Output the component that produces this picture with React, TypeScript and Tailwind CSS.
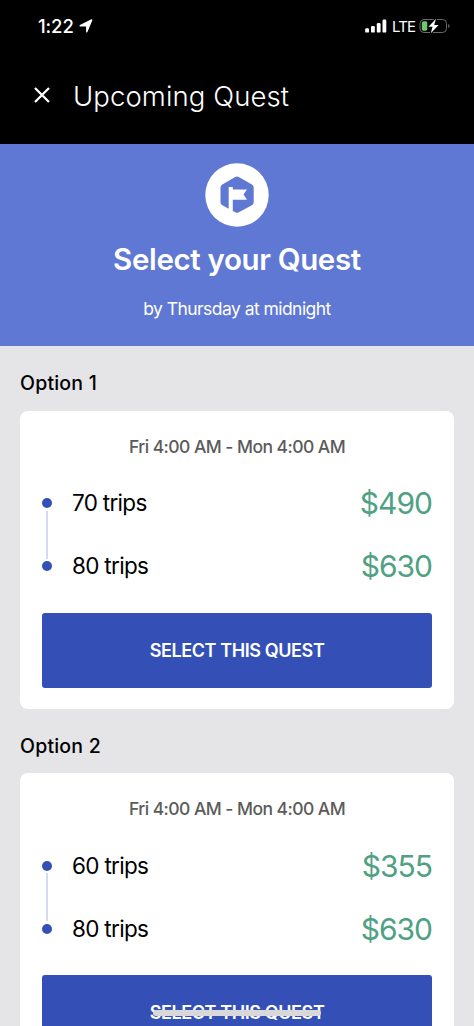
type Tier = { trips: number; reward: number };

const options: { name: string; tiers: Tier[] }[] = [
    {
        name: "Option 1",
        tiers: [
            { trips: 70, reward: 490 },
            { trips: 80, reward: 630 },
        ],
    },
    {
        name: "Option 2",
        tiers: [
            { trips: 60, reward: 355 },
            { trips: 80, reward: 630 },
        ],
    },
];

function StatusBar() {
    return (
        <div className="flex h-[52px] items-center justify-between pl-[38px] pr-[24px] text-white">
            <div className="flex items-center gap-[5px]">
                <span className="pt-px text-[18.5px] font-medium leading-none tracking-[-0.1px]">1:22</span>
                <svg width="14" height="14" viewBox="0 0 14 14" className="mt-[-1px]" fill="currentColor">
                    <path
                        d="M12.7 1 7.8 12.8V6.7H1.2Z"
                        stroke="currentColor"
                        strokeWidth="1.4"
                        strokeLinejoin="round"
                    />
                </svg>
            </div>
            <div className="flex items-center">
                <svg width="22" height="14" viewBox="0 0 22 14" fill="currentColor">
                    <rect x="0.2" y="9.2" width="3.8" height="4.4" rx="1.2" />
                    <rect x="6" y="7" width="3.8" height="6.6" rx="1.2" />
                    <rect x="11.8" y="4" width="3.8" height="9.6" rx="1.2" />
                    <rect x="17.5" y="0.5" width="3.8" height="13.1" rx="1.2" />
                </svg>
                <span className="ml-[5px] w-[21px] pt-px text-[15px] leading-none tracking-[-0.9px]">LTE</span>
                <svg width="31" height="16" viewBox="0 0 31 16" className="ml-[6px]">
                    <rect x="1" y="1.5" width="26.5" height="13" rx="4" fill="none" stroke="#6b6b6b" />
                    <rect x="2.8" y="3.2" width="5.5" height="9.6" rx="1.8" fill="#6cc96b" />
                    <path d="M29.2 6q1.4.6 1.400 2t-1.400 2Z" fill="#6b6b6b" />
                    <path
                        d="M17 0.8 9.5 8.8H13.6L11.800 15.200 19.600 7H15.200Z"
                        fill="white"
                        stroke="black"
                        strokeWidth="2"
                        strokeLinejoin="round"
                        paintOrder="stroke"
                    />
                </svg>
            </div>
        </div>
    );
}

function QuestBadge() {
    return (
        <svg width="64" height="64" viewBox="0 0 64 64">
            <circle cx="32" cy="32" r="31.7" fill="white" />
            <path
                d="M30.2 14Q32 13 33.8 14L46.9 21.4Q48.7 22.4 48.7 24.4V39.2Q48.7 41.2 46.9 42.2L33.8 49.3Q32 50.3 30.2 49.3L27.8 48V36.7H42L38.5 31.5 42 26.4H27.8V24H23.7V45.8L17.3 42.2Q15.5 41.2 15.5 39.2V24.4Q15.5 22.4 17.3 21.4Z"
                fill="#5f78d3"
            />
        </svg>
    );
}

function TierRow({ tier, last }: { tier: Tier; last: boolean }) {
    return (
        <div className="relative flex h-[63px] items-center">
            <span className="size-[10px] rounded-full bg-[#3450b7]" />
            {!last && <span className="absolute left-[4px] top-[39px] h-[48px] w-[2px] bg-[#d3dcf1]" />}
            <span className="ml-[20px] text-[22.5px] tracking-[-0.7px] text-black">{tier.trips} trips</span>
            <span className="ml-auto pt-px text-[30px] tracking-[-1px] text-[#4fa183]">${tier.reward}</span>
        </div>
    );
}

function QuestOption({ name, tiers }: { name: string; tiers: Tier[] }) {
    return (
        <section className="h-[362.5px] shrink-0">
            <h2 className="pt-[25px] text-[19.5px] font-medium leading-6 tracking-[0.2px] text-black">{name}</h2>
            <div className="mt-[15.5px] h-[298px] rounded-lg bg-white px-[22px] pt-[24px]">
                <p className="text-center text-[17.5px] font-medium leading-6 tracking-[-0.55px] text-[#5b5b5b]">
                    Fri 4:00 AM - Mon 4:00 AM
                </p>
                <div className="mt-[13px]">
                    {tiers.map((tier, i) => (
                        <TierRow key={i} tier={tier} last={i === tiers.length - 1} />
                    ))}
                </div>
                <button className="mt-[15px] h-[75px] w-full rounded-[3px] bg-[#3450b7] text-[18px] font-semibold tracking-[-0.4px] text-white">
                    SELECT THIS QUEST
                </button>
            </div>
        </section>
    );
}

export default function App() {
    return (
        <div className="relative flex h-[1026px] w-[474px] flex-col overflow-hidden bg-[#e5e5e7] font-['Inter',sans-serif]">
            <header className="h-[144px] shrink-0 bg-black">
                <StatusBar />
                <div className="flex h-[88px] items-center pl-[34px] text-white">
                    <svg width="16" height="16" viewBox="0 0 16 16" stroke="currentColor" strokeWidth="2.3" className="mt-[-2px]">
                        <path d="M1 1 15 15M15 1 1 15" />
                    </svg>
                    <h1 className="ml-[23px] pt-[2px] text-[27.5px] font-[350] tracking-[0.1px]">Upcoming Quest</h1>
                </div>
            </header>
            <div className="flex h-[202px] shrink-0 flex-col items-center bg-[#5f78d3] pt-[19px] text-white">
                <QuestBadge />
                <p className="mt-[14px] text-[29.5px] font-semibold leading-9 tracking-[-0.35px]">Select your Quest</p>
                <p className="mt-[20px] text-[17.5px] leading-6 tracking-[-0.55px]">by Thursday at midnight</p>
            </div>
            <main className="px-5">
                {options.map((option) => (
                    <QuestOption key={option.name} {...option} />
                ))}
            </main>
            <div className="absolute bottom-[10px] left-[153px] h-[6px] w-[168px] rounded-full bg-[#d8d8da]" />
        </div>
    );
}
